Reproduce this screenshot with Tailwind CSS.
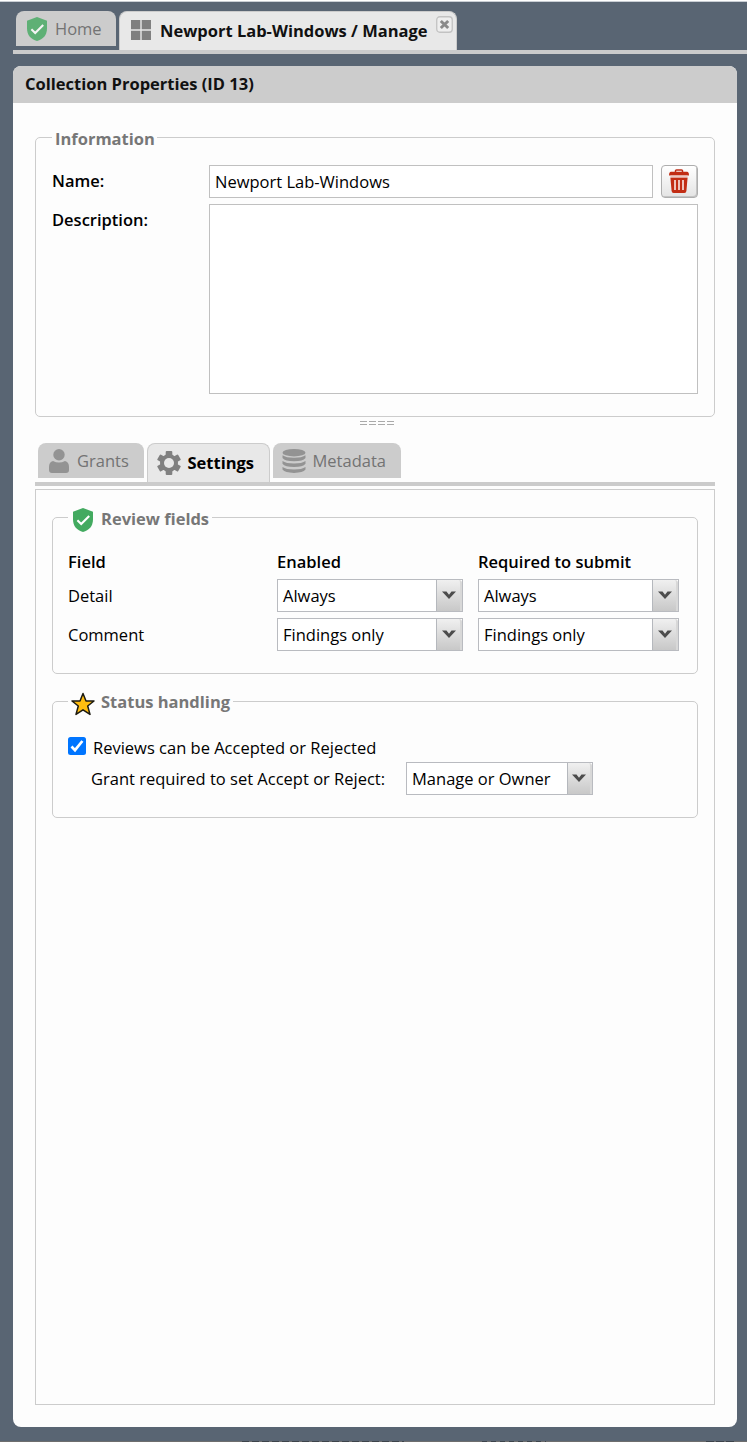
<!DOCTYPE html>
<html lang="en">
<head>
<meta charset="utf-8">
<title>Collection Properties</title>
<script src="https://cdn.jsdelivr.net/npm/@tailwindcss/browser@4"></script>
</head>
<body class="h-[1442px] w-[747px] overflow-hidden bg-[#596573] font-['Open_Sans',sans-serif] text-[16.5px] leading-[22px] text-black">
<svg class="hidden">
  <symbol id="shield" viewBox="0 0 20 24">
    <path d="M10 0 20 3.700V11.500C20 18 16 22.500 10 24 4 22.500 0 18 0 11.500V3.700Z" fill="#43aa60"/>
    <path d="M4.400 12.300 8.200 16 16.200 8" fill="none" stroke="#fff" stroke-width="2.100"/>
  </symbol>
  <symbol id="chev" viewBox="0 0 14 9">
    <path d="M0 .5H4.500L7 3.700 9.500 .5H14L7 8Z" fill="#4c4c4c"/>
  </symbol>
</svg>
<div class="flex h-full flex-col">
  <div class="h-[2px] shrink-0 border-b border-[#c9ced4] bg-white"></div>

  <div class="ml-[13px] mt-[9px] flex h-[43px] shrink-0 items-start gap-[3px] border-b-4 border-[#cbcbcb] pl-[3px]">
    <div class="flex h-[35px] w-[100px] items-center rounded-t-[8px] bg-[#cccccc] pl-[11px] text-[#737373]">
      <svg class="h-6 w-5 opacity-80"><use href="#shield"/></svg>
      <span class="ml-[8px] whitespace-nowrap">Home</span>
    </div>
    <div class="flex h-[39px] w-[338px] rounded-t-[8px] border border-b-0 border-[#cccccc] bg-[#e8e8e8] pl-[11px]">
      <svg class="mt-[8px] h-5 w-5" viewBox="0 0 20 20" fill="#808080"><path d="M0 0h9.300v9.300H0zM10.700 0H20v9.300h-9.300zM0 10.700h9.300V20H0zM10.700 10.700H20V20h-9.300z"/></svg>
      <span class="ml-[9px] mt-[8px] whitespace-nowrap font-bold text-[#111]">Newport Lab-Windows / Manage</span>
      <svg class="ml-auto mr-[3px] mt-[4px] h-[17px] w-[17px]" viewBox="0 0 17 17"><rect x=".75" y=".75" width="15.500" height="15.500" rx="3" fill="#eee" stroke="#c2c2c2" stroke-width="1.300"/><path d="m4.800 5 7.400 7M12.200 5l-7.400 7" stroke="#8a8a8a" stroke-width="3"/></svg>
    </div>
  </div>

  <div class="ml-[13px] mt-[12px] flex h-[1361px] w-[724px] shrink-0 flex-col rounded-[8px] bg-[#fdfdfd]">
    <div class="flex h-[37px] shrink-0 items-center rounded-t-[8px] bg-[#cccccc] pb-[2px] pl-[12px] font-bold text-[#111]">Collection Properties (ID 13)</div>

    <div class="ml-[22px] mt-[34px] h-[280px] w-[680px] shrink-0 rounded-[5px] border border-[#cccccc] pl-4">
      <div class="-mt-[10px] flex h-[22px] w-[105px] items-center bg-[#fdfdfd] pl-[3px] font-bold text-[#777]">Information</div>
      <div class="mt-[15px] flex h-[33px]">
        <div class="w-[157px] pt-[5px] font-semibold">Name:</div>
        <div class="flex w-[444px] items-center border border-[#c0c0c0] bg-white pl-[5px]">Newport Lab-Windows</div>
        <div class="ml-2 flex w-[37px] items-center justify-center rounded-[4px] border border-[#aeaeae] bg-linear-to-b from-white to-[#e4e4e4] pb-px pr-[2px] shadow-[inset_-1px_-1px_0_#c4c4c4]">
          <svg class="h-6 w-5" viewBox="0 0 20 24"><path d="M6.500 3V1.800Q6.500.9 7.500.9h5q1 0 1 .9V3" fill="none" stroke="#bf2c16" stroke-width="1.500"/><path d="M2 2.800H18Q20 2.800 20 6.500H0Q0 2.800 2 2.800Z" fill="#c22d14"/><path d="M1.400 6.500H18.600V9H1.400Z" fill="#edc8c2"/><path d="M1.400 8.800H18.600L17.400 22Q17.200 24 15.400 24H4.600Q2.800 24 2.600 22Z" fill="#c22d14"/><path d="M6 11v10M10 11v10M14 11v10" stroke="#f7dfda" stroke-width="1.700"/></svg>
        </div>
      </div>
      <div class="mt-[6px] flex h-[190px]">
        <div class="w-[157px] pt-[5px] font-semibold">Description:</div>
        <div class="w-[489px] border border-[#c0c0c0] bg-white"></div>
      </div>
    </div>

    <div class="ml-[347px] mt-[4px] flex h-[4px] shrink-0 gap-[2px]">
      <div class="w-[7px] border-y border-[#aaa]"></div><div class="w-[7px] border-y border-[#aaa]"></div><div class="w-[7px] border-y border-[#aaa]"></div><div class="w-[7px] border-y border-[#aaa]"></div>
    </div>

    <div class="ml-[22px] mt-[18px] flex h-[43px] w-[680px] shrink-0 items-start gap-[3px] border-b-4 border-[#cbcbcb] pl-[3px]">
      <div class="flex h-[35px] w-[106px] items-center rounded-t-[8px] bg-[#cccccc] pl-[11px] text-[#737373]">
        <svg class="h-6 w-5" viewBox="0 0 20 24" fill="#939393"><circle cx="10" cy="5.700" r="5.700"/><path d="M4 12Q10 15 16 12Q20 13 20 18V21Q20 24 17 24H3Q0 24 0 21V18Q0 13 4 12Z"/></svg>
        <span class="ml-[8px]">Grants</span>
      </div>
      <div class="flex h-[39px] w-[123px] items-center rounded-t-[8px] border border-b-0 border-[#cccccc] bg-[#e8e8e8] pl-[9px]">
        <svg class="h-6 w-6" viewBox="0 0 24 24"><g fill="#808080"><circle cx="12" cy="12" r="9"/><rect x="8.700" y="0" width="6.600" height="24" rx="1"/><rect x="8.700" y="0" width="6.600" height="24" rx="1" transform="rotate(60 12 12)"/><rect x="8.700" y="0" width="6.600" height="24" rx="1" transform="rotate(120 12 12)"/></g><circle cx="12" cy="12" r="5" fill="#e8e8e8"/></svg>
        <span class="ml-[6.500px] font-bold">Settings</span>
      </div>
      <div class="flex h-[35px] w-[128px] items-center rounded-t-[8px] bg-[#cccccc] pl-[9px] text-[#737373]">
        <svg class="h-6 w-6" viewBox="0 0 24 24" fill="#939393"><ellipse cx="12" cy="3.700" rx="11.500" ry="3.700"/><path id="disk" d="M.5 6.300Q4 8.800 12 8.800T23.500 6.300V9Q21 12.300 12 12.300T.5 9Z"/><use href="#disk" y="5.800"/><use href="#disk" y="11.600"/></svg>
        <span class="ml-[6.500px]">Metadata</span>
      </div>
    </div>

    <div class="ml-[22px] mt-[3px] h-[916px] w-[680px] shrink-0 border border-[#cccccc] pl-4 pt-[27px]">
      <div class="h-[157px] w-[646px] rounded-[5px] border border-[#cccccc] pl-[15px]">
        <div class="-mt-[10px] flex h-[24px] w-[144px] items-center bg-[#fdfdfd] pl-[5px] font-bold text-[#777]">
          <svg class="h-6 w-5"><use href="#shield"/></svg>
          <span class="-mt-[2px] ml-[8px] whitespace-nowrap">Review fields</span>
        </div>
        <div class="mt-[19px] flex h-[22px] font-semibold"><div class="w-[209px]">Field</div><div class="w-[201px]">Enabled</div><div>Required to submit</div></div>
        <div class="mt-[6px] flex h-[33px]">
          <div class="w-[209px] pt-[6px]">Detail</div>
          <div class="mr-[15px] flex w-[186px] items-center justify-between border border-[#b9bbc0] bg-white pl-[5px]"><span>Always</span><div class="flex h-full w-[26px] items-center justify-center rounded-tr-[3px] border-l border-r-2 border-l-[#b5b8bd] border-r-[#d8d8d8] bg-linear-to-b from-[#f0f0f0] to-[#c8c8c8]"><svg class="-mt-px h-[9px] w-[14px]"><use href="#chev"/></svg></div></div>
          <div class="flex w-[201px] items-center justify-between border border-[#b9bbc0] bg-white pl-[5px]"><span>Always</span><div class="flex h-full w-[26px] items-center justify-center rounded-tr-[3px] border-l border-r-2 border-l-[#b5b8bd] border-r-[#d8d8d8] bg-linear-to-b from-[#f0f0f0] to-[#c8c8c8]"><svg class="-mt-px h-[9px] w-[14px]"><use href="#chev"/></svg></div></div>
        </div>
        <div class="mt-[6px] flex h-[33px]">
          <div class="w-[209px] pt-[6px]">Comment</div>
          <div class="mr-[15px] flex w-[186px] items-center justify-between border border-[#b9bbc0] bg-white pl-[5px]"><span>Findings only</span><div class="flex h-full w-[26px] items-center justify-center rounded-tr-[3px] border-l border-r-2 border-l-[#b5b8bd] border-r-[#d8d8d8] bg-linear-to-b from-[#f0f0f0] to-[#c8c8c8]"><svg class="-mt-px h-[9px] w-[14px]"><use href="#chev"/></svg></div></div>
          <div class="flex w-[201px] items-center justify-between border border-[#b9bbc0] bg-white pl-[5px]"><span>Findings only</span><div class="flex h-full w-[26px] items-center justify-center rounded-tr-[3px] border-l border-r-2 border-l-[#b5b8bd] border-r-[#d8d8d8] bg-linear-to-b from-[#f0f0f0] to-[#c8c8c8]"><svg class="-mt-px h-[9px] w-[14px]"><use href="#chev"/></svg></div></div>
        </div>
      </div>

      <div class="mt-[27px] h-[117px] w-[646px] rounded-[5px] border border-[#cccccc] pl-[15px]">
        <div class="-mt-[10px] flex h-[24px] w-[165px] items-center bg-[#fdfdfd] pl-[3px] font-bold text-[#777]">
          <svg class="h-6 w-6" viewBox="0 0 24 24"><path d="M12 1.500 15 9H23L16.700 14 19 22.400 12 17.800 5 22.400 7.300 14 1 9H9Z" fill="#ffbd10" stroke="#1c1a10" stroke-width="1.500" stroke-linejoin="round"/></svg>
          <span class="-mt-[4px] ml-[6px] whitespace-nowrap">Status handling</span>
        </div>
        <div class="mt-[21px] flex h-[22px]">
          <svg class="h-[18px] w-[18px]" viewBox="0 0 18 18"><rect width="18" height="18" rx="2.500" fill="#0075ff"/><path d="m3.500 9.500 3.500 3.600L14.400 4" fill="none" stroke="#fff" stroke-width="2.700"/></svg>
          <span class="ml-[7px]">Reviews can be Accepted or Rejected</span>
        </div>
        <div class="ml-[23px] mt-[3px] flex h-[33px]">
          <div class="w-[315px] pt-[6px]">Grant required to set Accept or Reject:</div>
          <div class="flex w-[187px] items-center justify-between border border-[#b9bbc0] bg-white pl-[5px]"><span>Manage or Owner</span><div class="flex h-full w-[25px] items-center justify-center rounded-tr-[3px] border-l border-r-2 border-l-[#b5b8bd] border-r-[#d8d8d8] bg-linear-to-b from-[#f0f0f0] to-[#c8c8c8]"><svg class="-mt-px h-[9px] w-[14px]"><use href="#chev"/></svg></div></div>
        </div>
      </div>
    </div>
  </div>

  <div class="mt-auto flex h-px shrink-0 bg-[#6e6e6e]">
    <div class="ml-[242px] w-[162px] bg-[repeating-linear-gradient(90deg,#3d444b_0_7px,#6e6e6e_7px_10px)]"></div>
    <div class="ml-[78px] w-[64px] bg-[repeating-linear-gradient(90deg,#3d444b_0_5px,#6e6e6e_5px_9px)]"></div>
    <div class="ml-[160px] w-[28px] bg-[repeating-linear-gradient(90deg,#3d444b_0_8px,#6e6e6e_8px_10px)]"></div>
  </div>
</div>
</body>
</html>
